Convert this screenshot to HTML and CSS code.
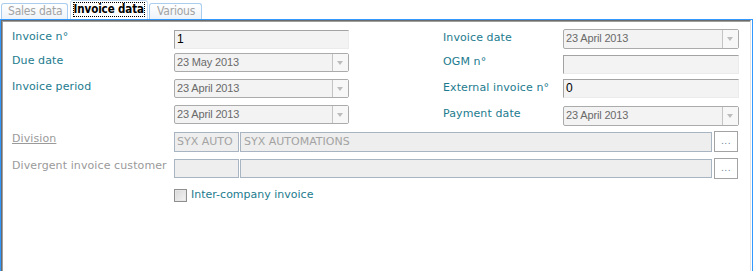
FILE: index.html
```html
<!DOCTYPE html>
<html>
<head>
  <meta charset="UTF-8">
  <title>Invoice data</title>
  <link rel="stylesheet" href="styles.css">
</head>
<body>
<div class="window">
  <div class="tabs">
    <div class="tab">Sales data</div>
    <div class="tab active"><span class="focus">Invoice data</span></div>
    <div class="tab last-tab">Various</div>
  </div>

  <div class="panel">
    <div class="panel-inner">
      <div class="grid">
        <div class="label">Invoice n°</div>
        <div class="textbox first">1</div>
        <div class="label right">Invoice date</div>
        <div class="combo wide"><span class="value">23 April 2013</span><span class="arrow"></span></div>

        <div class="label">Due date</div>
        <div class="combo"><span class="value">23 May 2013</span><span class="arrow"></span></div>
        <div class="label right">OGM n°</div>
        <div class="textbox wide ogm"></div>

        <div class="label">Invoice period</div>
        <div class="combo"><span class="value">23 April 2013</span><span class="arrow"></span></div>
        <div class="label right">External invoice n°</div>
        <div class="textbox wide">0</div>

        <div class="label"></div>
        <div class="combo"><span class="value">23 April 2013</span><span class="arrow"></span></div>
        <div class="label right">Payment date</div>
        <div class="combo wide last"><span class="value">23 April 2013</span><span class="arrow"></span></div>
      </div>

      <div class="lookup">
        <div class="label muted link">Division</div>
        <div class="box code">SYX AUTO</div>
        <div class="box name">SYX AUTOMATIONS</div>
        <button class="dots">...</button>
      </div>

      <div class="lookup second">
        <div class="label muted">Divergent invoice customer</div>
        <div class="box code"></div>
        <div class="box name"></div>
        <button class="dots">...</button>
      </div>

      <div class="check">
        <span class="checkbox"></span>
        <span class="check-label">Inter-company invoice</span>
      </div>
    </div>
  </div>
</div>
</body>
</html>
```

FILE: styles.css
```css
body {
  margin: 0;
  background: #fff;
  font-family: "DejaVu Sans", Verdana, sans-serif;
  font-size: 11px;
}
.window {
  width: 753px;
  height: 271px;
}

/* tab strip */
.tabs {
  display: flex;
  align-items: flex-end;
  height: 19px;
  padding-left: 1px;
}
.tab {
  height: 15px;
  line-height: 15px;
  padding: 0 4px 0 6px;
  margin-right: 2px;
  border: 1px solid #a9cdef;
  border-bottom: none;
  border-radius: 3px 3px 0 0;
  background: linear-gradient(#ffffff, #eef3f8);
  color: #a3a3a3;
  font-family: "DejaVu Sans Condensed", "DejaVu Sans", sans-serif;
  font-size: 12px;
  letter-spacing: -0.2px;
}
.tab.last-tab {
  padding: 0 6px 0 7px;
}
.tab.active {
  height: 18px;
  line-height: 16px;
  padding: 0 2px;
  margin-right: 1px;
  background: #fff;
  color: #000;
  font-weight: bold;
  font-size: 11.5px;
  letter-spacing: -0.1px;
  border-color: #c5dcf2;
}
.focus {
  display: inline-block;
  padding: 0 1px;
  margin-top: 1px;
  outline: 1px dotted #000;
  outline-offset: -1px;
  line-height: 15px;
}

/* panel frame */
.panel {
  height: 250px;
  border: 1px solid #3399ff;
  padding: 0 1px 1px 0;
}
.panel-inner {
  height: 247px;
  border-top: 1px solid #6b6b6b;
  border-left: 1px solid #6b6b6b;
  border-right: 1px solid #e3e3e3;
  border-bottom: 1px solid #e3e3e3;
  box-shadow: inset 1px 1px #a0a0a0;
  padding: 8px 0 0 10px;
}

.grid {
  display: grid;
  grid-template-columns: 162px 175px 214px 176px;
  grid-template-rows: 24px 26px 26px 26px;
}

.label {
  color: #1c7b8e;
  line-height: 14px;
  padding-top: 1px;
  white-space: nowrap;
  letter-spacing: 0.1px;
}
.label.right {
  padding-top: 2px;
  padding-left: 94px;
}
.label.muted {
  color: #9a9a9a;
}
.label.link {
  text-decoration: underline;
}

.textbox {
  box-sizing: border-box;
  height: 19px;
  background: #f3f3f3;
  border-top: 1px solid #a3a3a3;
  border-left: 1px solid #a3a3a3;
  border-right: 1px solid #ebebeb;
  border-bottom: 1px solid #ebebeb;
  padding-left: 2px;
  font-family: "Liberation Sans", Arial, sans-serif;
  font-size: 12px;
  line-height: 17px;
  color: #000;
}
.textbox.first {
  margin-top: 1px;
}
.textbox.ogm {
  margin-top: 2px;
}
.wide {
  width: 176px;
}

.combo {
  box-sizing: border-box;
  display: flex;
  height: 19px;
  border: 1px solid #ababab;
  border-radius: 2px;
  background: #f3f3f3;
}
.combo.wide {
  height: 20px;
}
.combo.last {
  margin-top: 1px;
}
.combo .value {
  flex: 1;
  padding-left: 2px;
  font-family: "Liberation Sans", Arial, sans-serif;
  font-size: 11px;
  letter-spacing: -0.15px;
  line-height: 17px;
  color: #6a6a6a;
}
.combo .arrow {
  position: relative;
  width: 15px;
  border-left: 1px solid #c4c4c4;
  background: #f7f7f7;
}
.combo .arrow::after {
  content: "";
  position: absolute;
  left: 4px;
  top: 7px;
  border-left: 3px solid transparent;
  border-right: 3px solid transparent;
  border-top: 4px solid #bcbcbc;
}

/* lookup rows */
.lookup {
  display: flex;
  align-items: center;
  height: 21px;
}
.lookup.second {
  margin-top: 6px;
}
.lookup .label {
  width: 162px;
  align-self: flex-start;
  padding-top: 1px;
}
.box {
  box-sizing: border-box;
  height: 20px;
  border: 1px solid #a8b4c2;
  background: #eeeeee;
  color: #a3a3a3;
  line-height: 18px;
  padding-left: 2px;
  white-space: nowrap;
  overflow: hidden;
}
.lookup.second .box {
  height: 19px;
}
.box.code {
  width: 65px;
  margin-right: 1px;
}
.box.name {
  width: 472px;
  margin-right: 2px;
  padding-left: 3px;
}
.dots {
  box-sizing: border-box;
  width: 24px;
  height: 21px;
  padding: 0;
  border: 1px solid #a3a3a3;
  background: #fff;
  color: #6d7f99;
  font-family: "DejaVu Sans", sans-serif;
  font-size: 9px;
  line-height: 19px;
  letter-spacing: 0.5px;
}

.check {
  display: flex;
  align-items: center;
  margin-top: 9px;
  margin-left: 162px;
}
.checkbox {
  box-sizing: border-box;
  width: 13px;
  height: 13px;
  border: 1px solid #8f8f8f;
  background: linear-gradient(135deg, #d8d8d8, #f4f4f4);
  box-shadow: inset 0 0 0 1px #e6e6e6;
  margin-right: 4px;
}
.check-label {
  color: #1c7b8e;
  line-height: 14px;
}
```
